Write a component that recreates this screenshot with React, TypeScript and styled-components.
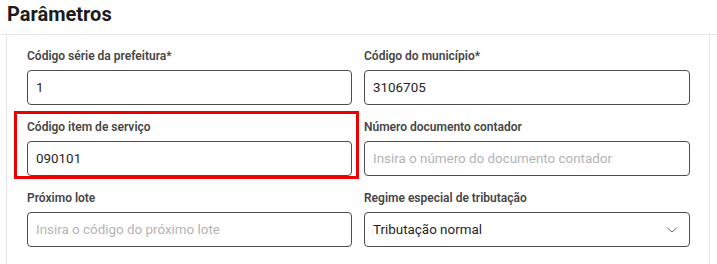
import React from 'react';
import styled, { createGlobalStyle } from 'styled-components';

const GlobalStyle = createGlobalStyle`
  html, body {
    margin: 0;
    padding: 0;
    background: #ffffff;
    font-family: Roboto, Inter, "Liberation Sans", sans-serif;
  }
`;

const Page = styled.div`
  width: 717px;
  height: 264px;
  overflow: hidden;
  background: #ffffff;
`;

const Header = styled.div`
  height: 34px;
  padding-left: 7px;
  border-bottom: 1px solid #e8e8e8;
  display: flex;
  align-items: center;
`;

const Title = styled.h2`
  margin: 0;
  margin-top: -6px;
  font-size: 20px;
  font-weight: 700;
  color: #1c1c1c;
`;

const Body = styled.div`
  margin: 0 7px 0 6px;
  min-height: 260px;
  border-left: 1px solid #e8e8e8;
  border-right: 1px solid #e8e8e8;
  padding: 13px 18px 0 20px;
`;

const Grid = styled.div`
  display: grid;
  grid-template-columns: 325px 326px;
  column-gap: 12px;
  row-gap: 14px;
`;

const Field = styled.div`
  position: relative;
  display: flex;
  flex-direction: column;
  gap: 6px;
`;

const Label = styled.label`
  font-size: 12px;
  line-height: 16px;
  font-weight: 600;
  color: #464646;
`;

const InputBox = styled.div<{ $placeholder?: boolean }>`
  height: 35px;
  box-sizing: border-box;
  border: 1px solid #4d4d4d;
  border-radius: 4px;
  padding: 0 10px 0 8px;
  display: flex;
  align-items: center;
  justify-content: space-between;
  font-size: 13.4px;
  color: ${(props) => (props.$placeholder ? '#b4b4b4' : '#1f1f1f')};
`;

const Highlight = styled.div`
  position: absolute;
  top: -8px;
  left: -13px;
  right: -7px;
  bottom: -3px;
  border: 3px solid #ee0000;
  pointer-events: none;
`;

const Chevron = () => (
  <svg width="14" height="14" viewBox="0 0 24 24" fill="none" stroke="#5a5a5a" strokeWidth="1.6" strokeLinecap="round" strokeLinejoin="round">
    <path d="M4 8.5l8 7 8-7" />
  </svg>
);

type FieldProps = {
  label: string;
  value?: string;
  placeholder?: string;
  select?: boolean;
  highlighted?: boolean;
};

const FormField = ({ label, value, placeholder, select, highlighted }: FieldProps) => (
  <Field>
    <Label>{label}</Label>
    <InputBox $placeholder={!value}>
      <span>{value || placeholder}</span>
      {select && <Chevron />}
    </InputBox>
    {highlighted && <Highlight />}
  </Field>
);

export default function App() {
  return (
    <Page>
      <GlobalStyle />
      <Header>
        <Title>Parâmetros</Title>
      </Header>
      <Body>
        <Grid>
          <FormField label="Código série da prefeitura*" value="1" />
          <FormField label="Código do município*" value="3106705" />
          <FormField label="Código item de serviço" value="090101" highlighted />
          <FormField label="Número documento contador" placeholder="Insira o número do documento contador" />
          <FormField label="Próximo lote" placeholder="Insira o código do próximo lote" />
          <FormField label="Regime especial de tributação" value="Tributação normal" select />
        </Grid>
      </Body>
    </Page>
  );
}
